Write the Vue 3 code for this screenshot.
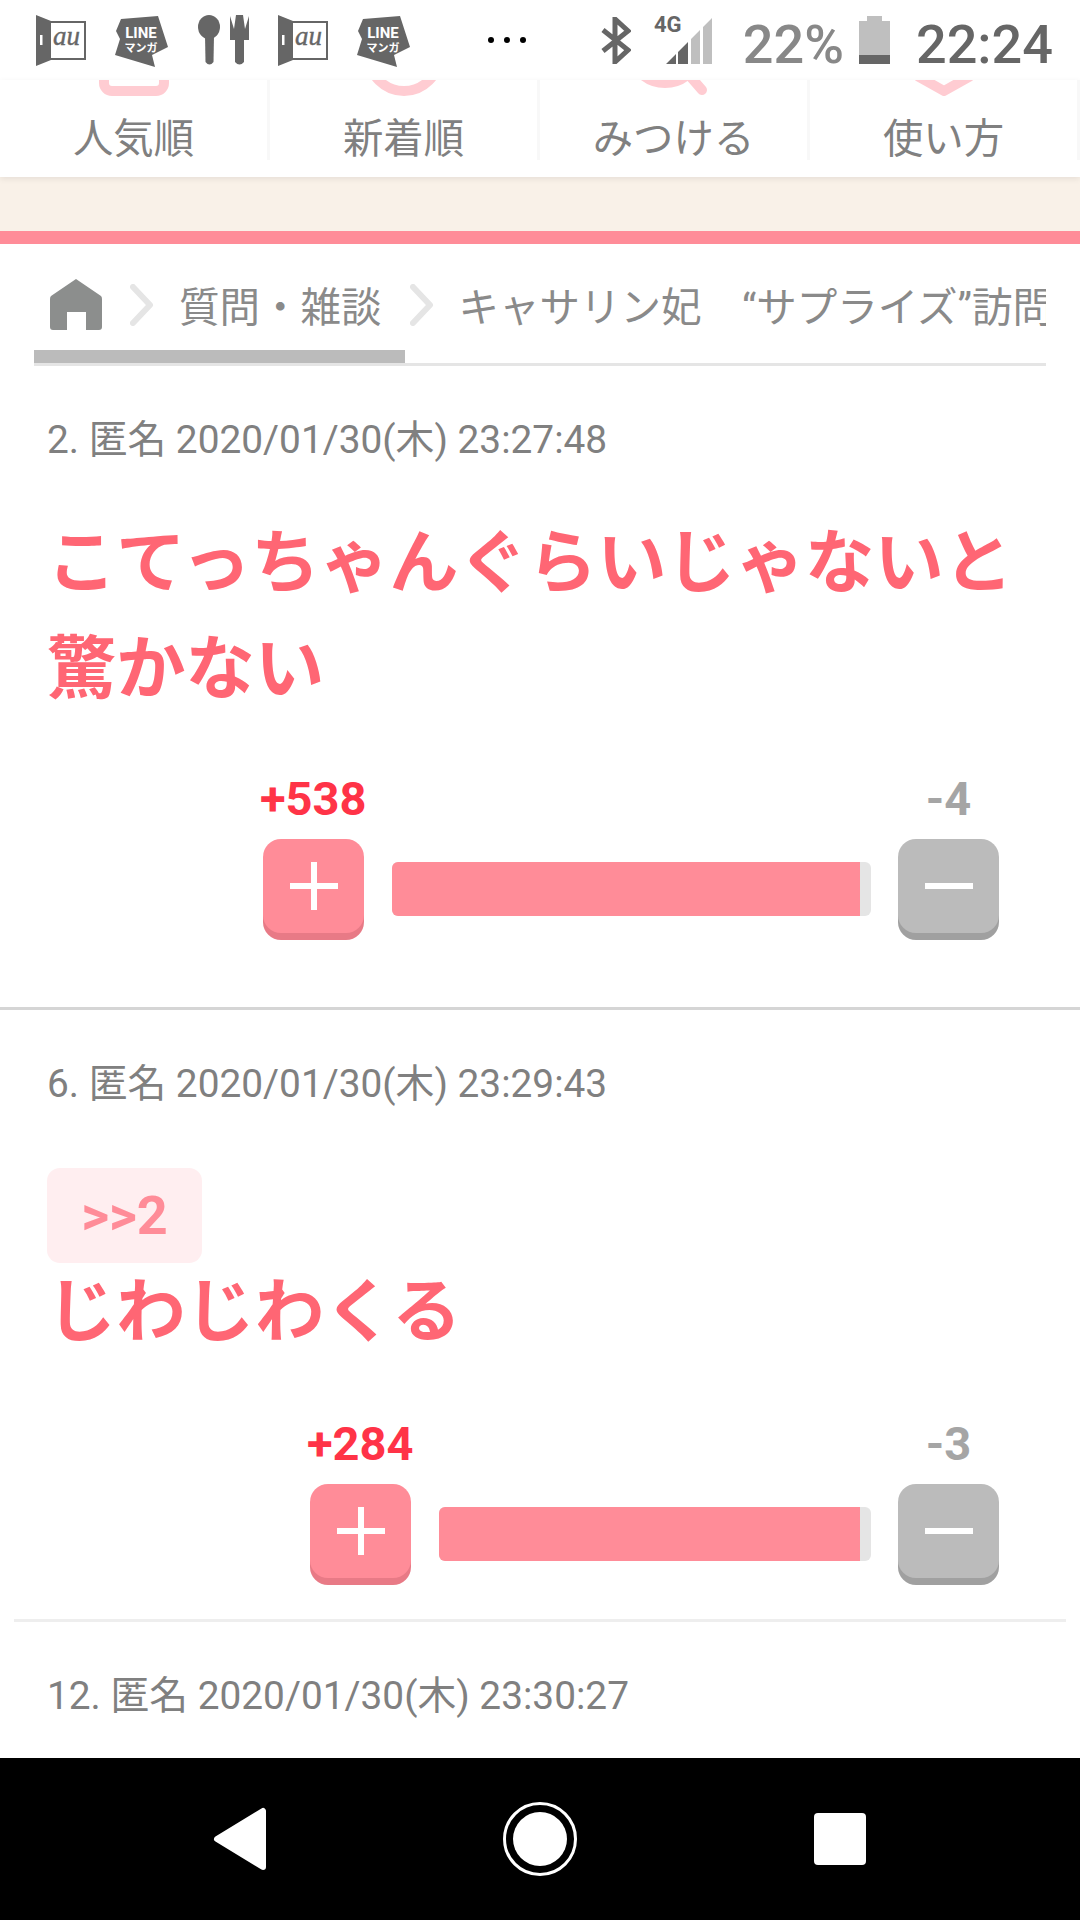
<template>
  <div class="page">
    <!-- ステータスバー -->
    <div class="status">
      <svg class="st-au" viewBox="0 0 50 52">
        <path d="M0 0L15 6H50V45H15L0 51Z" fill="#666" />
        <rect x="15" y="8" width="33" height="35" fill="#fff" />
        <rect x="4" y="20" width="2.500" height="10" fill="#fff" />
        <text x="30.500" y="30" class="au-text">au</text>
      </svg>
      <svg class="st-line" viewBox="0 0 54 53">
        <path d="M6 4L43 1L53 32L37 40L40 52L0 40L5 24L1 16Z" fill="#666" />
        <text x="26" y="23" class="line-text">LINE</text>
        <text x="26" y="37" class="manga-text">マンガ</text>
      </svg>
      <svg class="st-food" viewBox="0 0 51 51">
        <ellipse cx="11" cy="12" rx="11" ry="12" fill="#666" />
        <path d="M7 20H16L15.500 47Q11.500 52 7.500 47Z" fill="#666" />
        <path d="M32 1L36 14L38 0H45L47 14L51 1V25H46L46 47Q41.500 52 37 47L37 25H32Z" fill="#666" />
      </svg>
      <svg class="st-au" viewBox="0 0 50 52">
        <path d="M0 0L15 6H50V45H15L0 51Z" fill="#666" />
        <rect x="15" y="8" width="33" height="35" fill="#fff" />
        <rect x="4" y="20" width="2.500" height="10" fill="#fff" />
        <text x="30.500" y="30" class="au-text">au</text>
      </svg>
      <svg class="st-line" viewBox="0 0 54 53">
        <path d="M6 4L43 1L53 32L37 40L40 52L0 40L5 24L1 16Z" fill="#666" />
        <text x="26" y="23" class="line-text">LINE</text>
        <text x="26" y="37" class="manga-text">マンガ</text>
      </svg>
      <div class="st-dots"><i></i><i></i><i></i></div>

      <div class="st-right">
        <svg class="st-bt" viewBox="0 0 30 47">
          <path d="M2 13L27 33L14 45V2L27 14L2 34" fill="none" stroke="#666" stroke-width="5" />
        </svg>
        <svg class="st-signal" viewBox="0 -6 58 62">
          <text x="0" y="17" class="g4-text">4G</text>
          <path d="M12 49L22 39V49Z M24 37L34 27V49H24Z" fill="#666" />
          <path d="M37 24L46 15V49H37Z M49 12L58 3V49H49Z" fill="#bfbfbf" />
        </svg>
        <span class="st-pct">22%</span>
        <svg class="st-batt" viewBox="0 0 31 48">
          <path d="M8 0H23V5H31V39H0V5H8Z" fill="#bfbfbf" />
          <rect x="0" y="39" width="31" height="9" fill="#666" />
        </svg>
        <span class="st-time">22:24</span>
      </div>
    </div>

    <!-- タブ -->
    <div class="tabs">
      <div v-for="tab in tabs" :key="tab.label" class="tab">
        <svg class="tab-icon" viewBox="0 0 70 16" v-html="tab.icon"></svg>
        <span class="tab-label">{{ tab.label }}</span>
      </div>
    </div>
    <div class="band"></div>

    <div class="main">
      <!-- パンくず -->
      <div class="crumb">
        <svg class="crumb-home" viewBox="0 0 52 51">
          <path d="M26 0L51 17Q52 18 52 20V48Q52 51 49 51H36V33H17V51H3Q0 51 0 48V20Q0 18 1 17Z" fill="#8c8e8d" />
        </svg>
        <svg class="crumb-arrow" viewBox="0 0 24 42">
          <path d="M3 3L20 21L3 39" fill="none" stroke="#e5e5e5" stroke-width="6" stroke-linecap="round" stroke-linejoin="round" />
        </svg>
        <span class="crumb-text">質問・雑談</span>
        <svg class="crumb-arrow" viewBox="0 0 24 42">
          <path d="M3 3L20 21L3 39" fill="none" stroke="#e5e5e5" stroke-width="6" stroke-linecap="round" stroke-linejoin="round" />
        </svg>
        <span class="crumb-text">キャサリン妃　“サプライズ”訪問</span>
        <div class="crumb-thumb"></div>
      </div>

      <!-- 投稿 -->
      <div v-for="post in posts" :key="post.no" class="post" :class="post.cls">
        <div class="post-meta">{{ post.no }}. 匿名 {{ post.date }}</div>
        <template v-if="post.text">
          <div v-if="post.anchor" class="post-anchor">{{ post.anchor }}</div>
          <div class="post-text" :class="{ 'after-anchor': post.anchor }">{{ post.text }}</div>
          <div class="vote">
            <div class="vote-counts">
              <span class="count-plus">{{ post.plus }}</span>
              <span class="count-minus">{{ post.minus }}</span>
            </div>
            <div class="vote-row">
              <div class="btn btn-plus">
                <svg viewBox="0 0 48 48"><path d="M21 0h6v48h-6z M0 21h48v6H0z" fill="#fff" /></svg>
              </div>
              <div class="bar" :style="{ width: post.barWidth + 'px' }">
                <div class="bar-fill" :style="{ width: post.fill + '%' }"></div>
              </div>
              <div class="btn btn-minus">
                <svg viewBox="0 0 48 48"><path d="M0 21h48v6H0z" fill="#fff" /></svg>
              </div>
            </div>
          </div>
        </template>
      </div>
    </div>

    <!-- ナビゲーションバー -->
    <div class="nav">
      <div class="nav-item">
        <svg class="nav-back" viewBox="0 0 54 64">
          <path d="M4 32L50 4V60Z" fill="#fff" stroke="#fff" stroke-width="6" stroke-linejoin="round" />
        </svg>
      </div>
      <div class="nav-item">
        <svg class="nav-home" viewBox="0 0 74 74">
          <circle cx="37" cy="37" r="35.500" fill="none" stroke="#fff" stroke-width="3" />
          <circle cx="37" cy="37" r="27" fill="#fff" />
        </svg>
      </div>
      <div class="nav-item">
        <div class="nav-square"></div>
      </div>
    </div>
  </div>
</template>

<script setup>
const tabs = [
  {
    label: '人気順',
    icon: '<path d="M5 -5V3a8 8 0 0 0 8 8H57a8 8 0 0 0 8-8V-5" fill="none" stroke="#ffccd2" stroke-width="10" />'
  },
  {
    label: '新着順',
    icon: '<circle cx="35" cy="-24" r="35" fill="none" stroke="#ffccd2" stroke-width="10" />'
  },
  {
    label: 'みつける',
    icon: '<circle cx="26" cy="-32" r="35" fill="none" stroke="#ffccd2" stroke-width="10" /><path d="M50 -5L63 10" fill="none" stroke="#ffccd2" stroke-width="10" stroke-linecap="round" />'
  },
  {
    label: '使い方',
    icon: '<path d="M10 -3L35 11L60 -3" fill="none" stroke="#ffccd2" stroke-width="10" stroke-linecap="round" stroke-linejoin="round" />'
  }
]

const posts = [
  {
    no: 2,
    date: '2020/01/30(木) 23:27:48',
    text: 'こてっちゃんぐらいじゃないと驚かない',
    plus: '+538',
    minus: '-4',
    barWidth: 479,
    fill: 97.7,
    cls: 'post-first'
  },
  {
    no: 6,
    date: '2020/01/30(木) 23:29:43',
    anchor: '>>2',
    text: 'じわじわくる',
    plus: '+284',
    minus: '-3',
    barWidth: 432,
    fill: 97.4,
    cls: 'post-second'
  },
  {
    no: 12,
    date: '2020/01/30(木) 23:30:27',
    cls: 'post-last'
  }
]
</script>

<style scoped>
.page {
  width: 1080px;
  height: 1920px;
  display: flex;
  flex-direction: column;
  overflow: hidden;
  background: #fff;
  font-family: Roboto, "Noto Sans CJK JP", sans-serif;
}

/* ステータスバー */
.status {
  height: 80px;
  flex: none;
  display: flex;
  align-items: center;
  gap: 29px;
  padding: 0 27px 0 36px;
  box-sizing: border-box;
}

.st-au {
  width: 50px;
  height: 52px;
  margin-top: 1px;
}

.st-line {
  width: 54px;
  height: 53px;
  margin-top: 3px;
}

.st-food {
  width: 51px;
  height: 51px;
  margin-top: 1px;
}

.au-text {
  font-family: "Liberation Serif", serif;
  font-style: italic;
  font-size: 27px;
  fill: #666;
  stroke: #666;
  stroke-width: 0.4px;
  text-anchor: middle;
}

.line-text {
  font-family: Roboto, sans-serif;
  font-weight: 700;
  font-size: 15px;
  fill: #fff;
  text-anchor: middle;
}

.manga-text {
  font-weight: 700;
  font-size: 11px;
  fill: #fff;
  text-anchor: middle;
}

.st-dots {
  display: flex;
  gap: 10px;
  margin-left: 48px;
}

.st-dots i {
  width: 6px;
  height: 6px;
  border-radius: 50%;
  background: #000;
}

.st-right {
  margin-left: auto;
  display: flex;
  align-items: center;
}

.st-bt {
  width: 30px;
  height: 47px;
}

.st-signal {
  width: 58px;
  height: 62px;
  margin-left: 23px;
}

.g4-text {
  font-family: Roboto, sans-serif;
  font-weight: 700;
  font-size: 22px;
  fill: #666;
}

.st-pct {
  margin: 10px 0 0 31px;
  font-size: 54px;
  font-weight: 500;
  color: #888;
  line-height: 60px;
}

.st-batt {
  width: 31px;
  height: 48px;
  margin-left: 15px;
}

.st-time {
  margin: 10px 0 0 26px;
  font-size: 54px;
  font-weight: 500;
  color: #666;
  line-height: 60px;
}

/* タブ */
.tabs {
  height: 97px;
  flex: none;
  display: grid;
  grid-template-columns: repeat(4, 1fr);
  background: #fff;
  box-shadow: 0 2px 6px rgba(0, 0, 0, 0.08);
  position: relative;
}

.tab {
  height: 80px;
  display: flex;
  flex-direction: column;
  align-items: center;
  gap: 22px;
  border-right: 3px solid #f8f8f8;
}

.tab-icon {
  width: 70px;
  height: 16px;
  flex: none;
}

.tab-label {
  font-size: 40.400px;
  line-height: 44px;
  color: #808080;
}

.band {
  height: 54px;
  flex: none;
  background: #f9f1e8;
  border-bottom: 13px solid #ff8c98;
}

.main {
  flex: 1;
  min-height: 0;
  overflow: hidden;
}

/* パンくず */
.crumb {
  position: relative;
  height: 122px;
  margin: 0 34px;
  padding: 2px 0 0 16px;
  box-sizing: border-box;
  display: flex;
  align-items: center;
  gap: 28px;
  white-space: nowrap;
  overflow: hidden;
  border-bottom: 3px solid #e5e5e5;
}

.crumb-home {
  width: 52px;
  height: 51px;
  flex: none;
}

.crumb-arrow {
  width: 24px;
  height: 42px;
  flex: none;
}

.crumb-text {
  font-size: 40.500px;
  color: #8a8a8a;
  flex: none;
  margin-left: -3px;
}

.crumb-thumb {
  position: absolute;
  left: 0;
  bottom: 0;
  width: 371px;
  height: 13px;
  background: #bbb;
}

/* 投稿 */
.post {
  padding: 49px 64px 74px 47px;
}

.post-first {
  border-bottom: 3px solid #d5d5d5;
}

.post-second {
  position: relative;
  padding-bottom: 44px;
}

.post-second::after {
  content: "";
  position: absolute;
  left: 14px;
  right: 14px;
  bottom: 0;
  height: 3px;
  background: #eee;
}

.post-meta {
  font-size: 38.800px;
  line-height: 50px;
  color: #808080;
}

.post-anchor {
  margin-top: 59px;
  width: 155px;
  height: 95px;
  border-radius: 13px;
  background: #ffeef0;
  color: #ff8c98;
  font-size: 54px;
  font-weight: 700;
  line-height: 95px;
  text-align: center;
}

.post-text {
  margin-top: 46px;
  font-size: 69.300px;
  font-weight: 700;
  line-height: 106px;
  color: #ff6674;
}

.post-text.after-anchor {
  margin-top: -3px;
}

.vote {
  width: fit-content;
  margin: 51px 17px 0 auto;
}

.post-second .vote {
  margin-top: 53px;
}

.vote-counts {
  display: flex;
  justify-content: space-between;
  height: 50px;
  line-height: 50px;
  font-size: 47px;
  font-weight: 700;
}

.count-plus,
.count-minus {
  width: 101px;
  text-align: center;
  white-space: nowrap;
}

.count-plus {
  color: #ff3347;
  margin-left: -3px;
}

.count-minus {
  color: #a5a5a5;
}

.vote-row {
  margin-top: 15px;
  display: flex;
  align-items: flex-start;
}

.btn {
  width: 101px;
  height: 94px;
  border-radius: 18px;
  flex: none;
  display: flex;
  align-items: center;
  justify-content: center;
}

.btn svg {
  width: 48px;
  height: 48px;
}

.btn-plus {
  background: #ff8c98;
  box-shadow: 0 7px 0 #e87a86;
}

.btn-minus {
  background: #bbb;
  box-shadow: 0 7px 0 #a0a0a0;
}

.bar {
  height: 54px;
  margin: 23px 27px 0 28px;
  border-radius: 6px;
  background: #e5e5e5;
  overflow: hidden;
}

.bar-fill {
  height: 100%;
  background: #ff8c98;
}

/* ナビゲーションバー */
.nav {
  height: 162px;
  flex: none;
  background: #000;
  display: flex;
  justify-content: center;
  align-items: center;
}

.nav-item {
  width: 300px;
  display: flex;
  justify-content: center;
  align-items: center;
}

.nav-back {
  width: 54px;
  height: 64px;
}

.nav-home {
  width: 74px;
  height: 74px;
}

.nav-square {
  width: 52px;
  height: 52px;
  border-radius: 4px;
  background: #fff;
}
</style>
